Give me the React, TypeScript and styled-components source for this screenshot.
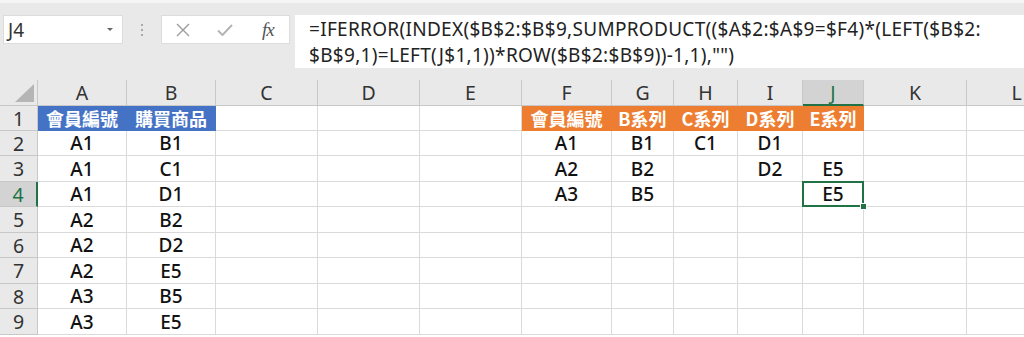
import styled, { createGlobalStyle } from "styled-components";

const GlobalStyle = createGlobalStyle`
  body {
    margin: 0;
    background: #fff;
    overflow: hidden;
    font-family: "Noto Sans", "Noto Sans CJK TC", sans-serif;
  }
`;

const LETTERS = ["A", "B", "C", "D", "E", "F", "G", "H", "I", "J", "K", "L"];
const WIDTHS = [89, 89, 102, 102, 102, 90, 62, 64, 65, 61, 103, 100];
const HEIGHTS = [26, 25, 25, 26, 25, 26, 25, 26, 25, 26];

type Fill = "blue" | "orange" | undefined;

const fills: Record<string, string> = {
  blue: "#4472c4",
  orange: "#ed7d31",
};

// row -> column letter -> value
const data: Record<number, Record<string, string>> = {
  1: { A: "會員編號", B: "購買商品", F: "會員編號", G: "B系列", H: "C系列", I: "D系列", J: "E系列" },
  2: { A: "A1", B: "B1", F: "A1", G: "B1", H: "C1", I: "D1" },
  3: { A: "A1", B: "C1", F: "A2", G: "B2", I: "D2", J: "E5" },
  4: { A: "A1", B: "D1", F: "A3", G: "B5", J: "E5" },
  5: { A: "A2", B: "B2" },
  6: { A: "A2", B: "D2" },
  7: { A: "A2", B: "E5" },
  8: { A: "A3", B: "B5" },
  9: { A: "A3", B: "E5" },
};

const fillFor = (row: number, col: string): Fill => {
  if (row !== 1) return undefined;
  if (col === "A" || col === "B") return "blue";
  if ("FGHIJ".includes(col)) return "orange";
  return undefined;
};

const Toolbar = styled.div`
  height: 80px;
  box-sizing: border-box;
  background: #e9e9e9;
  border-top: 3px solid #f5f5f5;
  padding: 12px 0 0 3px;
  display: flex;
  align-items: flex-start;
`;

const NameBox = styled.div`
  width: 120px;
  height: 29px;
  box-sizing: border-box;
  background: #fff;
  border: 1px solid #dcdcdc;
  display: flex;
  align-items: center;
  justify-content: space-between;
  padding: 0 9px 0 4px;
  font-size: 19px;
  color: #333;
`;

const Caret = styled.span`
  width: 0;
  height: 0;
  border-left: 3px solid transparent;
  border-right: 3px solid transparent;
  border-top: 3px solid #666;
`;

const Dots = styled.div`
  width: 38px;
  height: 29px;
  display: flex;
  flex-direction: column;
  align-items: center;
  justify-content: center;
  gap: 3px;

  span {
    width: 2px;
    height: 2px;
    background: #a9a9a9;
  }
`;

const ButtonBox = styled.div`
  width: 129px;
  height: 29px;
  box-sizing: border-box;
  background: #fff;
  border: 1px solid #dcdcdc;
  display: flex;
`;

const Slot = styled.div`
  flex: 1;
  display: flex;
  align-items: center;
  justify-content: center;
`;

const Fx = styled.span`
  font-family: "Liberation Serif", serif;
  font-style: italic;
  font-size: 19px;
  color: #555;
  letter-spacing: -1px;
`;

const FormulaBox = styled.div`
  flex: 1;
  margin-left: 5px;
  height: 53px;
  box-sizing: border-box;
  background: #fff;
  padding: 1px 0 0 14px;
  font-size: 19px;
  letter-spacing: 0.3px;
  line-height: 26px;
  color: #222;
  white-space: nowrap;
`;

const Sheet = styled.div`
  display: grid;
  grid-template-columns: 38px ${WIDTHS.map((w) => `${w}px`).join(" ")};
  grid-template-rows: ${HEIGHTS.map((h) => `${h}px`).join(" ")};
`;

const Corner = styled.div`
  background: #e9e9e9;
  border-right: 1px solid #c8c8c8;
  border-bottom: 1px solid #c8c8c8;
  position: relative;

  &::after {
    content: "";
    position: absolute;
    right: 3px;
    bottom: 3px;
    width: 0;
    height: 0;
    border-left: 19px solid transparent;
    border-bottom: 18px solid #b5b5b5;
  }
`;

const ColHead = styled.div<{ $active?: boolean }>`
  box-sizing: border-box;
  background: ${(p) => (p.$active ? "#d3d3d3" : "#e9e9e9")};
  border-right: 1px solid #c8c8c8;
  border-bottom: ${(p) => (p.$active ? "2px solid #217346" : "1px solid #c8c8c8")};
  color: ${(p) => (p.$active ? "#217346" : "#333")};
  font-size: 19.5px;
  display: flex;
  align-items: center;
  justify-content: center;
`;

const RowHead = styled.div<{ $active?: boolean }>`
  box-sizing: border-box;
  background: ${(p) => (p.$active ? "#d3d3d3" : "#e9e9e9")};
  border-right: ${(p) => (p.$active ? "2px solid #217346" : "1px solid #c8c8c8")};
  border-bottom: 1px solid #c8c8c8;
  color: ${(p) => (p.$active ? "#217346" : "#333")};
  font-size: 19.5px;
  display: flex;
  align-items: center;
  justify-content: center;
`;

const Cell = styled.div<{ $fill?: Fill; $selected?: boolean }>`
  position: relative;
  box-sizing: border-box;
  background: ${(p) => (p.$fill ? fills[p.$fill] : "#fff")};
  border-right: 1px solid ${(p) => (p.$fill ? fills[p.$fill] : "#dadada")};
  border-bottom: 1px solid ${(p) => (p.$fill ? fills[p.$fill] : "#dadada")};
  color: ${(p) => (p.$fill ? "#fff" : "#111")};
  font-family: ${(p) =>
    p.$fill ? `"Noto Sans CJK TC", sans-serif` : `"Noto Sans", "Noto Sans CJK TC", sans-serif`};
  font-weight: ${(p) => (p.$fill ? 700 : 500)};
  font-size: ${(p) => (p.$fill ? "18px" : "19px")};
  display: flex;
  align-items: center;
  justify-content: center;
  white-space: nowrap;

  ${(p) =>
    p.$selected &&
    `
    &::after {
      content: "";
      position: absolute;
      inset: -1px -1px -1px -1px;
      border: 2px solid #217346;
      pointer-events: none;
    }
    &::before {
      content: "";
      position: absolute;
      right: -4px;
      bottom: -4px;
      width: 5px;
      height: 5px;
      background: #217346;
      border: 1px solid #fff;
      z-index: 2;
    }
  `}
`;

const Cross = () => (
  <svg width="14" height="14" viewBox="0 0 14 14">
    <path d="M1 1L13 13M13 1L1 13" stroke="#9c9c9c" strokeWidth="1.4" fill="none" />
  </svg>
);

const Check = () => (
  <svg width="16" height="12" viewBox="0 0 16 12">
    <path d="M1 6.5L5.5 11L15 1" stroke="#b4b4b4" strokeWidth="2" fill="none" />
  </svg>
);

export default function App() {
  const rows = HEIGHTS.length - 1;
  return (
    <>
      <GlobalStyle />
      <Toolbar>
        <NameBox>
          J4
          <Caret />
        </NameBox>
        <Dots>
          <span />
          <span />
          <span />
        </Dots>
        <ButtonBox>
          <Slot>
            <Cross />
          </Slot>
          <Slot>
            <Check />
          </Slot>
          <Slot>
            <Fx>fx</Fx>
          </Slot>
        </ButtonBox>
        <FormulaBox>
          <div>=IFERROR(INDEX($B$2:$B$9,SUMPRODUCT(($A$2:$A$9=$F4)*(LEFT($B$2:</div>
          <div>$B$9,1)=LEFT(J$1,1))*ROW($B$2:$B$9))-1,1),"")</div>
        </FormulaBox>
      </Toolbar>
      <Sheet>
        <Corner />
        {LETTERS.map((l) => (
          <ColHead key={l} $active={l === "J"}>
            {l}
          </ColHead>
        ))}
        {Array.from({ length: rows }, (_, i) => i + 1).map((r) => (
          <Row key={r} r={r} />
        ))}
      </Sheet>
    </>
  );
}

function Row({ r }: { r: number }) {
  return (
    <>
      <RowHead $active={r === 4}>{r}</RowHead>
      {LETTERS.map((l) => (
        <Cell key={l} $fill={fillFor(r, l)} $selected={r === 4 && l === "J"}>
          {data[r]?.[l] ?? ""}
        </Cell>
      ))}
    </>
  );
}
